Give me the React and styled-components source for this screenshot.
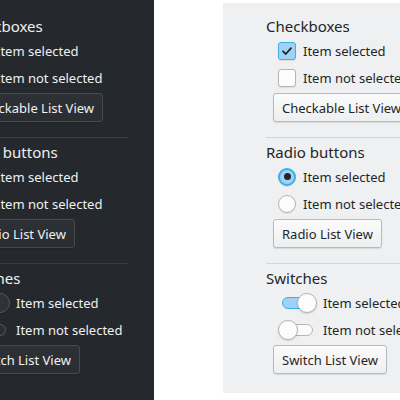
import React from 'react'
import styled, { createGlobalStyle, ThemeProvider } from 'styled-components'

const light = {
    bg: '#eff0f1',
    text: '#232629',
    line: '#d3d5d7',
    btnTop: '#fbfbfb',
    btnBottom: '#eeeff0',
    btnBorder: '#b8babc',
    box: '#fcfcfc',
    boxBorder: '#b3b5b7',
    accent: '#3daee9',
    accentFill: '#9fd2f4',
    knob: '#fcfcfc',
}

const dark = {
    bg: '#25292d',
    text: '#eff0f1',
    line: '#3a3e42',
    btnTop: '#2d3135',
    btnBottom: '#2a2e32',
    btnBorder: '#474b4f',
    box: '#2a2e32',
    boxBorder: '#55595d',
    accent: '#3daee9',
    accentFill: '#1d6b94',
    knob: '#2f3337',
}

const GlobalStyle = createGlobalStyle`
    html, body {
        margin: 0;
        padding: 0;
        background: #ffffff;
    }
    body {
        font-family: "Noto Sans", "DejaVu Sans", sans-serif;
    }
`

const Stage = styled.div`
    width: 400px;
    height: 400px;
    overflow: hidden;
    display: flex;
    align-items: flex-start;
    gap: 69px;
`

// the dark copy is cut off by the left edge of the shot
const Panel = styled.div`
    flex: none;
    width: 238px;
    box-sizing: border-box;
    background: ${p => p.theme.bg};
    color: ${p => p.theme.text};
    padding: ${p => p.$top}px 26px 0 43px;
    margin-left: ${p => p.$shift}px;
    margin-top: ${p => p.$offset}px;
    height: ${p => p.$height}px;
`

const Section = styled.section`
    display: flex;
    flex-direction: column;
    align-items: flex-start;
`

const Title = styled.h2`
    margin: 0 0 1px;
    font-size: 15px;
    line-height: 20px;
    font-weight: 400;
    white-space: nowrap;
`

const List = styled.div`
    display: flex;
    flex-direction: column;
    padding-left: 12px;
`

const Row = styled.label`
    display: flex;
    align-items: center;
    gap: ${p => p.$gap}px;
    height: 27px;
    font-size: 13px;
    white-space: nowrap;
`

const Box = styled.span`
    flex: none;
    width: 18px;
    height: 18px;
    box-sizing: border-box;
    border-radius: 3px;
    border: 1px solid ${p => (p.$on ? p.theme.accent : p.theme.boxBorder)};
    background: ${p => (p.$on ? p.theme.accentFill : p.theme.box)};
    box-shadow: 0 1px 1px rgba(0, 0, 0, 0.08);
    display: flex;
    align-items: center;
    justify-content: center;
`

const Radio = styled.span`
    flex: none;
    width: 18px;
    height: 18px;
    box-sizing: border-box;
    border-radius: 50%;
    border: ${p => (p.$on ? `2px solid ${p.theme.accent}` : `1px solid ${p.theme.boxBorder}`)};
    background: ${p => (p.$on ? p.theme.accentFill : p.theme.box)};
    box-shadow: 0 1px 1px rgba(0, 0, 0, 0.08);
    display: flex;
    align-items: center;
    justify-content: center;

    &::after {
        content: '';
        display: ${p => (p.$on ? 'block' : 'none')};
        width: 7px;
        height: 7px;
        border-radius: 50%;
        background: ${p => p.theme.text};
    }
`

const Switch = styled.span`
    flex: none;
    width: 39px;
    height: 20px;
    padding: 0 4px;
    box-sizing: border-box;
    display: flex;
    align-items: center;
`

const Track = styled.span`
    flex: none;
    width: 31px;
    height: 12px;
    box-sizing: border-box;
    border-radius: 6px;
    border: 1px solid ${p => (p.$on ? p.theme.accent : p.theme.boxBorder)};
    background: ${p => (p.$on ? p.theme.accentFill : p.theme.box)};
    display: flex;
    align-items: center;
    justify-content: ${p => (p.$on ? 'flex-end' : 'flex-start')};
`

const Knob = styled.span`
    flex: none;
    width: 20px;
    height: 20px;
    box-sizing: border-box;
    border-radius: 50%;
    border: 1px solid ${p => p.theme.boxBorder};
    background: ${p => p.theme.knob};
    box-shadow: 0 1px 2px rgba(0, 0, 0, 0.15);
    margin: 0 -5px;
`

const Button = styled.button`
    margin-top: 2px;
    margin-left: 7px;
    height: 29px;
    padding: 0 8px;
    box-sizing: border-box;
    font-family: inherit;
    font-size: 13px;
    color: ${p => p.theme.text};
    border: 1px solid ${p => p.theme.btnBorder};
    border-radius: 3px;
    background: linear-gradient(${p => p.theme.btnTop}, ${p => p.theme.btnBottom});
    box-shadow: 0 1px 1px rgba(0, 0, 0, 0.1);
    white-space: nowrap;
`

const Separator = styled.hr`
    align-self: stretch;
    border: none;
    height: 1px;
    background: ${p => p.theme.line};
    margin: 15px 0 4px;
`

const Check = () => (
    <svg width="12" height="12" viewBox="0 0 12 12">
        <path d="M2 6.3 L4.8 9 L10 3.2" fill="none" stroke="#232629" strokeWidth="1.8" strokeLinecap="round" strokeLinejoin="round" />
    </svg>
)

const SwitchControl = ({ on }) => (
    <Switch>
        <Track $on={on}>
            <Knob />
        </Track>
    </Switch>
)

const Content = () => (
    <>
        <Section>
            <Title>Checkboxes</Title>
            <List>
                <Row $gap={7}><Box $on><Check /></Box>Item selected</Row>
                <Row $gap={7}><Box />Item not selected</Row>
            </List>
            <Button type="button">Checkable List View</Button>
            <Separator />
        </Section>
        <Section>
            <Title>Radio buttons</Title>
            <List>
                <Row $gap={7}><Radio $on />Item selected</Row>
                <Row $gap={7}><Radio />Item not selected</Row>
            </List>
            <Button type="button">Radio List View</Button>
            <Separator />
        </Section>
        <Section>
            <Title>Switches</Title>
            <List>
                <Row $gap={6}><SwitchControl on />Item selected</Row>
                <Row $gap={6}><SwitchControl />Item not selected</Row>
            </List>
            <Button type="button">Switch List View</Button>
        </Section>
    </>
)

const App = () => (
    <>
        <GlobalStyle />
        <Stage>
            <ThemeProvider theme={dark}>
                <Panel $shift={-84} $offset={0} $top={16} $height={400}>
                    <Content />
                </Panel>
            </ThemeProvider>
            <ThemeProvider theme={light}>
                <Panel $shift={0} $offset={3} $top={13} $height={390}>
                    <Content />
                </Panel>
            </ThemeProvider>
        </Stage>
    </>
)

export default App
